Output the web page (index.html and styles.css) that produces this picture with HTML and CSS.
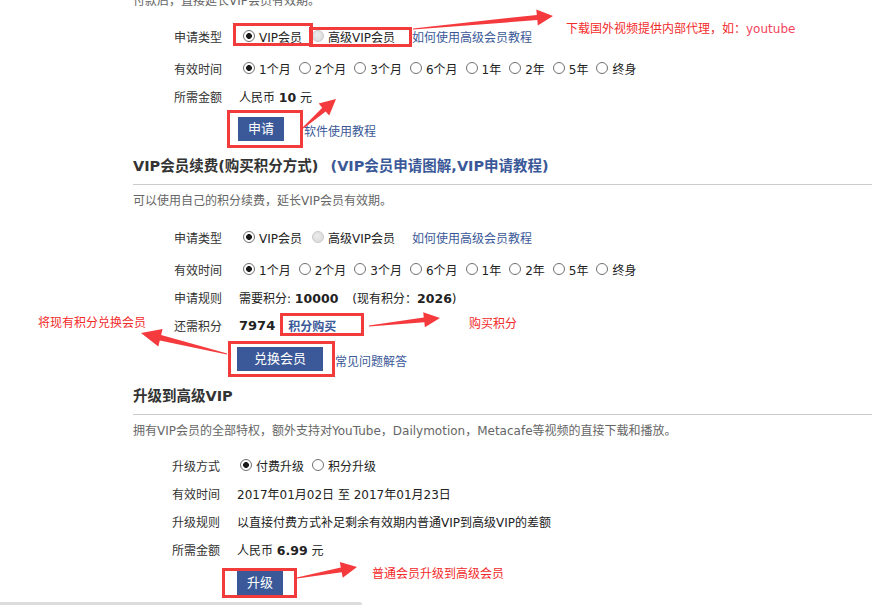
FILE: index.html
```html
<!DOCTYPE html>
<html lang="zh-CN">
<head>
  <meta charset="UTF-8">
  <title>VIP会员</title>
  <link rel="stylesheet" href="styles.css">
</head>
<body>
  <div class="page">
    <p class="intro intro-cut">付款后，直接延长VIP会员有效期。</p>

    <div class="form form-first">
      <div class="row row-type">
        <span class="label">申请类型</span>
        <label class="opt"><input type="radio" name="t1" checked>VIP会员</label>
        <label class="opt"><input type="radio" name="t1" disabled>高级VIP会员</label>
        <a class="link link-help" href="#">如何使用高级会员教程</a>
      </div>
      <div class="row">
        <span class="label">有效时间</span>
        <label class="opt"><input type="radio" name="d1" checked>1个月</label>
        <label class="opt"><input type="radio" name="d1">2个月</label>
        <label class="opt"><input type="radio" name="d1">3个月</label>
        <label class="opt"><input type="radio" name="d1">6个月</label>
        <label class="opt"><input type="radio" name="d1">1年</label>
        <label class="opt"><input type="radio" name="d1">2年</label>
        <label class="opt"><input type="radio" name="d1">5年</label>
        <label class="opt"><input type="radio" name="d1">终身</label>
      </div>
      <div class="row">
        <span class="label">所需金额</span>
        <span class="value">人民币 <b>10</b> 元</span>
      </div>
      <div class="actions">
        <button class="btn">申请</button>
        <a class="link link-after" href="#">软件使用教程</a>
      </div>
    </div>

    <h2 class="section-title">VIP会员续费(购买积分方式)<a class="title-link" href="#">(VIP会员申请图解,VIP申请教程)</a></h2>
    <p class="intro">可以使用自己的积分续费，延长VIP会员有效期。</p>

    <div class="form form-renew">
      <div class="row row-type">
        <span class="label">申请类型</span>
        <label class="opt"><input type="radio" name="t2" checked>VIP会员</label>
        <label class="opt"><input type="radio" name="t2" disabled>高级VIP会员</label>
        <a class="link link-help" href="#">如何使用高级会员教程</a>
      </div>
      <div class="row">
        <span class="label">有效时间</span>
        <label class="opt"><input type="radio" name="d2" checked>1个月</label>
        <label class="opt"><input type="radio" name="d2">2个月</label>
        <label class="opt"><input type="radio" name="d2">3个月</label>
        <label class="opt"><input type="radio" name="d2">6个月</label>
        <label class="opt"><input type="radio" name="d2">1年</label>
        <label class="opt"><input type="radio" name="d2">2年</label>
        <label class="opt"><input type="radio" name="d2">5年</label>
        <label class="opt"><input type="radio" name="d2">终身</label>
      </div>
      <div class="row">
        <span class="label">申请规则</span>
        <span class="value">需要积分: <b>10000</b></span>
        <span class="value have">(现有积分：<b>2026</b>)</span>
      </div>
      <div class="row">
        <span class="label">还需积分</span>
        <b class="need">7974</b>
        <a class="link buy" href="#">积分购买</a>
      </div>
      <div class="actions">
        <button class="btn btn-wide">兑换会员</button>
        <a class="link link-faq" href="#">常见问题解答</a>
      </div>
    </div>

    <h2 class="section-title">升级到高级VIP</h2>
    <p class="intro">拥有VIP会员的全部特权，额外支持对YouTube，Dailymotion，Metacafe等视频的直接下载和播放。</p>

    <div class="form form-upgrade">
      <div class="row">
        <span class="label">升级方式</span>
        <label class="opt"><input type="radio" name="u" checked>付费升级</label>
        <label class="opt"><input type="radio" name="u">积分升级</label>
      </div>
      <div class="row">
        <span class="label">有效时间</span>
        <span class="value">2017年01月02日 至 2017年01月23日</span>
      </div>
      <div class="row">
        <span class="label">升级规则</span>
        <span class="value">以直接付费方式补足剩余有效期内普通VIP到高级VIP的差额</span>
      </div>
      <div class="row">
        <span class="label">所需金额</span>
        <span class="value">人民币 <b>6.99</b> 元</span>
      </div>
      <div class="actions">
        <button class="btn">升级</button>
      </div>
    </div>
  </div>

  <!-- markup drawn on top of the screenshot -->
  <div class="annotations">
    <svg width="878" height="605" viewBox="0 0 878 605">
      <g fill="none" stroke="#f23b3b" stroke-width="3">
        <rect x="234.5" y="24.5" width="77" height="20"/>
        <rect x="310.5" y="28.5" width="100" height="17"/>
        <rect x="228.5" y="111.5" width="73" height="35"/>
        <rect x="281.5" y="314.5" width="81" height="20"/>
        <rect x="229.5" y="342.5" width="104" height="33"/>
        <rect x="223.5" y="569.5" width="72" height="27"/>
      </g>
      <g fill="#f53a3d">
        <polygon transform="translate(413 29) rotate(-5.3)" points="0,-0.6 124.6,-2.6 124.6,-8 140.6,0 124.6,8 124.6,2.6 0,0.6"/>
        <polygon transform="translate(303 128) rotate(-41.3)" points="0,-0.6 27.9,-2.6 27.9,-8 43.9,0 27.9,8 27.9,2.6 0,0.6"/>
        <polygon transform="translate(369 326) rotate(-6.4)" points="0,-0.6 55.4,-2.4 55.4,-7.5 71.4,0 55.4,7.5 55.4,2.4 0,0.6"/>
        <polygon transform="translate(227 354) rotate(-166.3)" points="0,-0.6 68.5,-2.8 68.5,-9 88.5,0 68.5,9 68.5,2.8 0,0.6"/>
        <polygon transform="translate(297 578) rotate(-10.4)" points="0,-0.6 45,-2.5 45,-8 61,0 45,8 45,2.5 0,0.6"/>
      </g>
    </svg>
    <div class="note note-download">下载国外视频提供内部代理，如：<span class="yt">youtube</span></div>
    <div class="note note-buy">购买积分</div>
    <div class="note note-exchange">将现有积分兑换会员</div>
    <div class="note note-upgrade">普通会员升级到高级会员</div>
  </div>

  <div class="scrollbar"></div>
</body>
</html>
```

FILE: styles.css
```css
html, body {
  margin: 0;
  overflow: hidden;
}

body {
  font-family: "DejaVu Sans", "Noto Sans CJK SC", sans-serif;
  font-size: 12px;
  color: #333;
  background: #fff;
}

.page {
  width: 739px;
  padding-left: 133px;
}

.intro {
  margin: 6px 0 0;
  line-height: 20px;
  color: #666;
}

.intro-cut {
  margin-top: -9px;
}

.section-title {
  margin: 15px 0 0;
  padding-bottom: 8px;
  border-bottom: 1px solid #cccccc;
  font-size: 14.5px;
  line-height: 20px;
  font-weight: bold;
  color: #333;
}

.title-link {
  margin-left: 12px;
  color: #3b5998;
  text-decoration: none;
}

.form {
  padding-left: 41px;
}

.form-first {
  margin-top: 11px;
}

.form-renew {
  margin-top: 12px;
}

.form-upgrade {
  margin-top: 10px;
  padding-left: 39px;
}

.row {
  display: flex;
  align-items: center;
  height: 28px;
}

.row-type {
  margin-bottom: 4px;
}

.label {
  width: 65px;
  flex-shrink: 0;
  color: #333;
}

.value {
  color: #222;
}

.value b {
  font-size: 12.5px;
}

.have {
  margin-left: 14px;
}

.opt {
  display: inline-flex;
  align-items: center;
  margin-right: 8px;
  color: #222;
}

.row-type .opt {
  margin-right: 10px;
}

.opt input {
  appearance: none;
  -webkit-appearance: none;
  width: 12px;
  height: 12px;
  margin: 0 4px 0 0;
  border: 1px solid #707070;
  border-radius: 50%;
  background: #fff;
}

.opt:first-of-type input {
  margin-left: 4px;
}

.form-upgrade .opt:first-of-type input {
  margin-left: 3px;
}

.opt input:checked {
  background: radial-gradient(circle, #1a1a1a 0 2.6px, #fff 3.2px);
}

.opt input:disabled {
  border-color: #c9c9c9;
  background: radial-gradient(circle at 45% 40%, #ececec, #d6d6d6);
}

.link {
  color: #3b5998;
  text-decoration: none;
}

.link-help {
  margin-left: 7px;
}

.need {
  font-size: 13px;
  color: #222;
}

.buy {
  margin-left: 13px;
  font-weight: bold;
}

.actions {
  display: flex;
  align-items: flex-end;
  margin-top: 7px;
  padding-left: 64px;
}

.actions .link {
  line-height: 17px;
}

.form-renew .actions,
.form-upgrade .actions {
  margin-top: 8px;
}

.form-renew .actions {
  padding-left: 63px;
}

.form-upgrade .actions {
  padding-left: 65px;
}

.btn {
  height: 24px;
  padding: 0 10px;
  border: none;
  background: #3b5998;
  color: #fff;
  font-family: "DejaVu Sans", "Noto Sans CJK SC", sans-serif;
  font-size: 13px;
  line-height: 24px;
  cursor: pointer;
}

.btn-wide {
  padding: 0 17px;
}

.link-after {
  margin-left: 20px;
}

.link-faq {
  margin-left: 12px;
}

.annotations {
  position: absolute;
  top: 0;
  left: 0;
  width: 878px;
  height: 605px;
  pointer-events: none;
}

.annotations svg {
  position: absolute;
  top: 0;
  left: 0;
}

.note {
  position: absolute;
  font-family: "Noto Sans CJK SC", sans-serif;
  font-size: 12px;
  line-height: 16px;
  color: #f22b2b;
  white-space: nowrap;
}

.yt {
  font-family: "DejaVu Sans", sans-serif;
  color: #f2435e;
}

.note-download { left: 566px; top: 20px; }
.note-buy { left: 469px; top: 315px; }
.note-exchange { left: 38px; top: 314px; }
.note-upgrade { left: 372px; top: 565px; }

.scrollbar {
  position: absolute;
  left: 0;
  bottom: 0;
  width: 362px;
  height: 3px;
  background: #dcdcdc;
  border-radius: 0 2px 0 0;
}
```
